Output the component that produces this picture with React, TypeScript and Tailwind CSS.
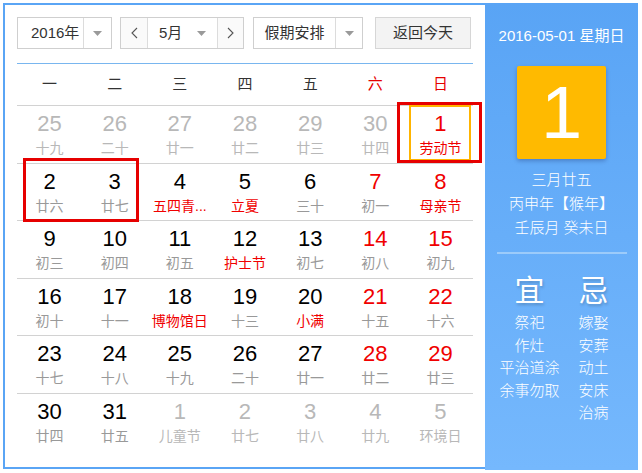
import React from "react";

type Day = { d: number; l: string; other?: boolean; fest?: boolean; sel?: boolean };

const rows: Day[][] = [
  [
    { d: 25, l: "十九", other: true },
    { d: 26, l: "二十", other: true },
    { d: 27, l: "廿一", other: true },
    { d: 28, l: "廿二", other: true },
    { d: 29, l: "廿三", other: true },
    { d: 30, l: "廿四", other: true },
    { d: 1, l: "劳动节", fest: true, sel: true },
  ],
  [
    { d: 2, l: "廿六" },
    { d: 3, l: "廿七" },
    { d: 4, l: "五四青...", fest: true },
    { d: 5, l: "立夏", fest: true },
    { d: 6, l: "三十" },
    { d: 7, l: "初一" },
    { d: 8, l: "母亲节", fest: true },
  ],
  [
    { d: 9, l: "初三" },
    { d: 10, l: "初四" },
    { d: 11, l: "初五" },
    { d: 12, l: "护士节", fest: true },
    { d: 13, l: "初七" },
    { d: 14, l: "初八" },
    { d: 15, l: "初九" },
  ],
  [
    { d: 16, l: "初十" },
    { d: 17, l: "十一" },
    { d: 18, l: "博物馆日", fest: true },
    { d: 19, l: "十三" },
    { d: 20, l: "小满", fest: true },
    { d: 21, l: "十五" },
    { d: 22, l: "十六" },
  ],
  [
    { d: 23, l: "十七" },
    { d: 24, l: "十八" },
    { d: 25, l: "十九" },
    { d: 26, l: "二十" },
    { d: 27, l: "廿一" },
    { d: 28, l: "廿二" },
    { d: 29, l: "廿三" },
  ],
  [
    { d: 30, l: "廿四" },
    { d: 31, l: "廿五" },
    { d: 1, l: "儿童节", other: true },
    { d: 2, l: "廿七", other: true },
    { d: 3, l: "廿八", other: true },
    { d: 4, l: "廿九", other: true },
    { d: 5, l: "环境日", other: true },
  ],
];

const weekdays = ["一", "二", "三", "四", "五", "六", "日"];

function Tri() {
  return (
    <svg width="9" height="5" viewBox="0 0 9 5">
      <polygon points="0,0 9,0 4.5,5" fill="#9a9a9a" />
    </svg>
  );
}

function Chevron({ dir }: { dir: "l" | "r" }) {
  return (
    <svg width="7" height="12" viewBox="0 0 7 12">
      <polyline
        points={dir === "l" ? "6,1 1,6 6,11" : "1,1 6,6 1,11"}
        fill="none"
        stroke="#555"
        strokeWidth="1.1"
      />
    </svg>
  );
}

export default function App() {
  return (
    <div className="relative w-[642px] h-[473px] bg-white pl-[3px] pt-[3px] flex font-['Liberation_Sans','Noto_Sans_CJK_SC',sans-serif]">
      {/* Left panel */}
      <div className="w-[482px] h-[466px] border-2 border-r-0 border-[#5aa5f5] px-[12px] pt-[12px]">
        {/* Toolbar */}
        <div className="flex h-[32px] text-[15px] text-[#333]">
          <div className="flex w-[95px] border border-[#cfcfcf] bg-white">
            <div className="w-[65px] flex items-center pl-[13px]">2016年</div>
            <div className="flex-1 border-l border-[#dcdcdc] flex items-center justify-center">
              <Tri />
            </div>
          </div>
          <div className="ml-[8px] flex w-[124px] border border-[#cfcfcf] bg-white">
            <div className="w-[26px] flex items-center justify-center bg-[#fafafa]">
              <Chevron dir="l" />
            </div>
            <div className="w-[71px] border-l border-r border-[#dcdcdc] flex items-center justify-between pl-[11px] pr-[11px]">
              <span>5月</span>
              <Tri />
            </div>
            <div className="flex-1 flex items-center justify-center bg-[#fafafa]">
              <Chevron dir="r" />
            </div>
          </div>
          <div className="ml-[9px] flex w-[110px] border border-[#cfcfcf] bg-white">
            <div className="w-[81px] flex items-center justify-center">假期安排</div>
            <div className="flex-1 border-l border-[#dcdcdc] flex items-center justify-center">
              <Tri />
            </div>
          </div>
          <div className="ml-[12px] w-[96px] border border-[#d6d6d6] bg-[#f3f3f3] flex items-center justify-center">
            返回今天
          </div>
        </div>

        {/* Blue divider */}
        <div className="mt-[14px] h-px bg-[#79b6ef]" />

        {/* Weekday header */}
        <div className="grid grid-cols-7 h-[41px] items-center text-[15px]">
          {weekdays.map((w, i) => (
            <div key={w} className={`text-center ${i >= 5 ? "text-[#e60000]" : "text-[#333]"}`}>
              {w}
            </div>
          ))}
        </div>

        {/* Day rows */}
        <div>
          {rows.map((row, ri) => (
            <div key={ri} className="grid grid-cols-7 h-[57.6px] border-t border-[#d2d2d2]">
              {row.map((c, ci) => {
                const digitColor = c.other
                  ? "text-[#b8b8b8]"
                  : ci >= 5
                  ? "text-[#f00000]"
                  : "text-black";
                const lunarColor = c.other
                  ? "text-[#b8b8b8]"
                  : c.fest
                  ? "text-[#f00000]"
                  : "text-[#999]";
                return (
                  <div key={ci} className="relative flex flex-col items-center pt-[6px]">
                    {c.sel && (
                      <div className="absolute top-[-1px] left-[1px] right-[2px] bottom-[2px] border-2 border-[#ffb400]" />
                    )}
                    <div className={`text-[22px] leading-[24px] ${digitColor}`}>{c.d}</div>
                    <div className={`mt-[4px] text-[14px] leading-[17px] whitespace-nowrap ${lunarColor}`}>
                      {c.l}
                    </div>
                  </div>
                );
              })}
            </div>
          ))}
        </div>
      </div>

      {/* Right panel */}
      <div className="w-[153px] h-[467px] bg-linear-to-b from-[#59a4f5] to-[#75b8fd] flex flex-col items-center pt-[23px] text-white">
        <div className="text-[15px] leading-[20px] whitespace-nowrap">2016-05-01 星期日</div>
        <div className="mt-[20px] w-[89px] h-[93px] rounded-[2px] bg-[#ffba00] flex items-center justify-center shadow-[0_2px_4px_rgba(0,0,60,0.25)]">
          <span className="text-[74px] leading-none text-white">1</span>
        </div>
        <div className="mt-[9px] flex flex-col items-center text-[15px] leading-[24px] font-light">
          <div>三月廿五</div>
          <div className="whitespace-nowrap">丙申年【猴年】</div>
          <div className="whitespace-nowrap">壬辰月 癸未日</div>
        </div>
        <div className="mt-[12px] w-[130px] h-[2px] bg-[#9ccbfa]" />
        <div className="mt-[19px] w-[128px] grid grid-cols-2">
          <div className="flex flex-col items-center">
            <div className="text-[30px] leading-[36px] [text-shadow:1px_2px_3px_rgba(0,0,0,0.2)]">宜</div>
            <div className="mt-[3px] flex flex-col items-center text-[15px] leading-[22.5px] whitespace-nowrap font-light">
              <div>祭祀</div>
              <div>作灶</div>
              <div>平治道涂</div>
              <div>余事勿取</div>
            </div>
          </div>
          <div className="flex flex-col items-center">
            <div className="text-[30px] leading-[36px] [text-shadow:1px_2px_3px_rgba(0,0,0,0.2)]">忌</div>
            <div className="mt-[3px] flex flex-col items-center text-[15px] leading-[22.5px] whitespace-nowrap font-light">
              <div>嫁娶</div>
              <div>安葬</div>
              <div>动土</div>
              <div>安床</div>
              <div>治病</div>
            </div>
          </div>
        </div>
      </div>

      {/* Red annotation boxes */}
      <div className="absolute left-[397px] top-[102px] w-[85px] h-[61px] border-[3px] border-[#e60000]" />
      <div className="absolute left-[23px] top-[158px] w-[116px] h-[64px] border-[3px] border-[#e60000]" />
    </div>
  );
}
